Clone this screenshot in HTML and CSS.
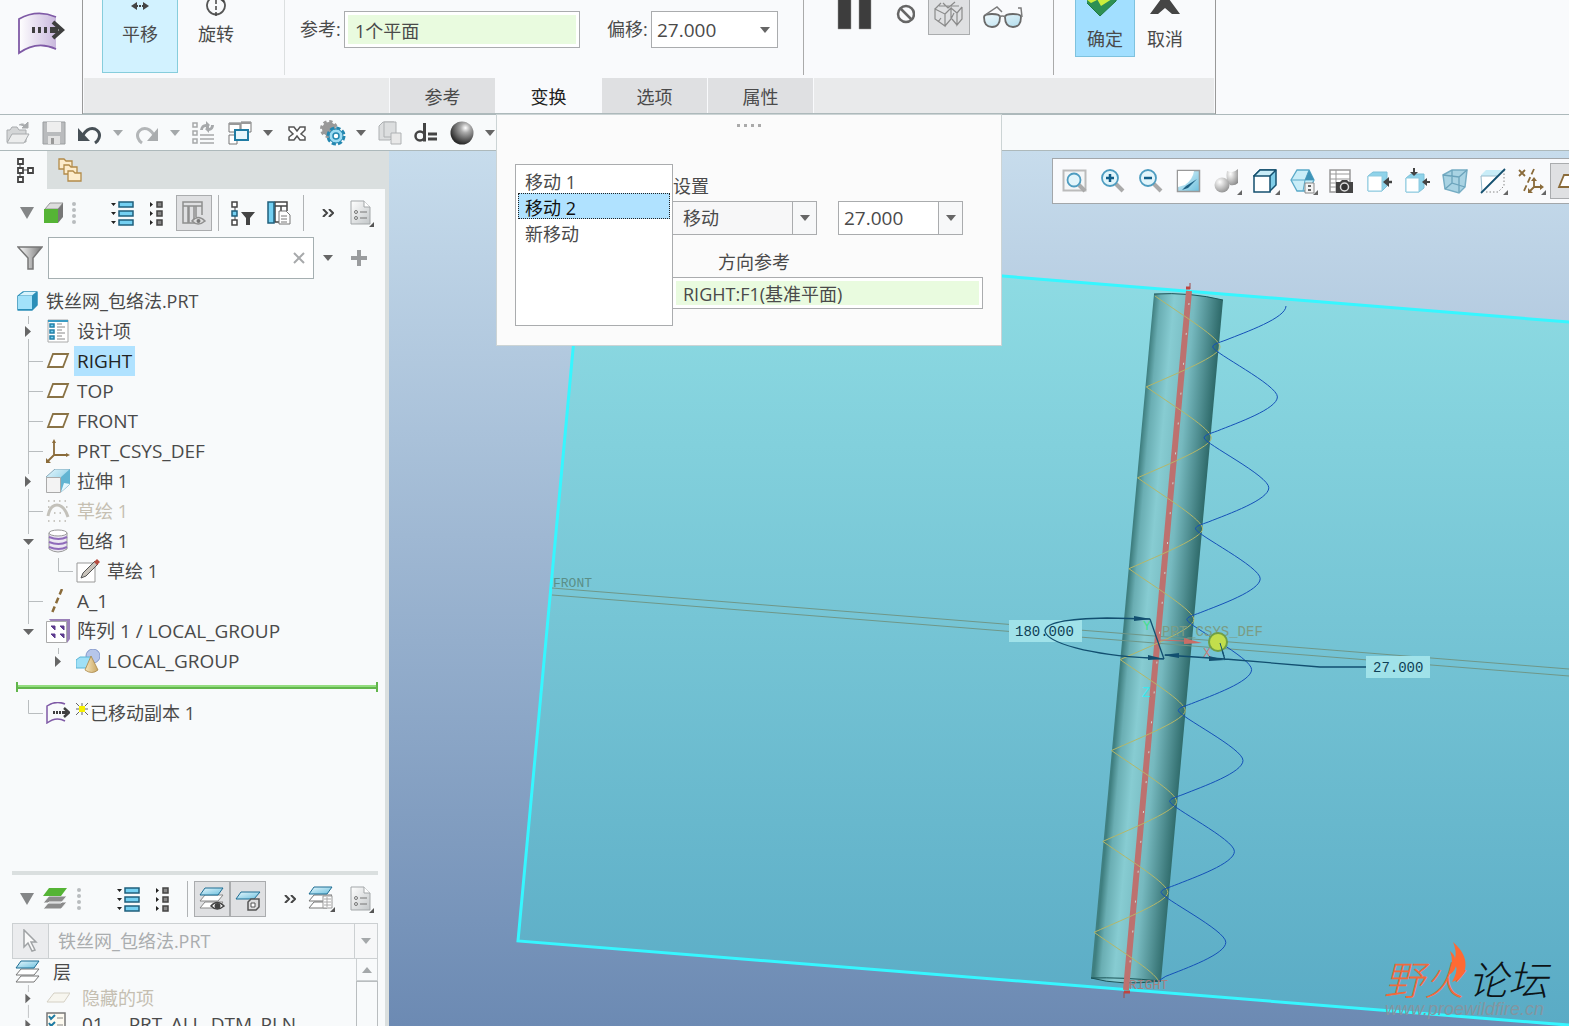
FILE: index.html
```html
<!DOCTYPE html>
<html lang="zh-CN">
<head>
    <meta charset="UTF-8">
    <meta name="viewport" content="width=device-width, initial-scale=1.0">
    <title>铁丝网_包络法.PRT</title>
    <link rel="stylesheet" href="styles.css">
</head>
<body>
    <!-- Shared icons -->
    <svg class="defs" width="0" height="0" aria-hidden="true">
        <defs>
            <linearGradient id="gSheet" x1="0" x2="1"><stop offset="0" stop-color="#fff"/><stop offset="1" stop-color="#c9b8dd"/></linearGradient>
            <linearGradient id="gBlue" x1="0" y1="0" x2="1" y2="1"><stop offset="0" stop-color="#e6f7fd"/><stop offset="1" stop-color="#6cc0de"/></linearGradient>
            <linearGradient id="gGray" x1="0" y1="0" x2="1" y2="1"><stop offset="0" stop-color="#fff"/><stop offset="1" stop-color="#c3c7c9"/></linearGradient>
            <linearGradient id="gFunnel" x1="0" x2="1"><stop offset="0" stop-color="#fff"/><stop offset="1" stop-color="#777"/></linearGradient>
            <linearGradient id="gTan" x1="0" x2="1"><stop offset="0" stop-color="#f7e6bd"/><stop offset="1" stop-color="#c9a763"/></linearGradient>
            <radialGradient id="gBall" cx=".65" cy=".28" r=".7"><stop offset="0" stop-color="#fff"/><stop offset=".3" stop-color="#aaa"/><stop offset="1" stop-color="#2c2c2c"/></radialGradient>
            <radialGradient id="gSilver" cx=".35" cy=".3" r=".8"><stop offset="0" stop-color="#fff"/><stop offset="1" stop-color="#8a8a8a"/></radialGradient>
        </defs>
        <symbol id="caret" viewBox="0 0 12 8"><path d="M1 1h10L6 7z" fill="#666"/></symbol>
        <symbol id="caret-off" viewBox="0 0 12 8"><path d="M1 1h10L6 7z" fill="#a4a8aa"/></symbol>
        <symbol id="toggle" viewBox="0 0 14 12"><path d="M0 0h14L7 12z" fill="#848687"/></symbol>
        <symbol id="grip" viewBox="0 0 4 24"><g fill="#b9bcbe"><circle cx="2" cy="3" r="2"/><circle cx="2" cy="9" r="2"/><circle cx="2" cy="15" r="2"/><circle cx="2" cy="21" r="2"/></g></symbol>
        <symbol id="expand" viewBox="0 0 24 26"><path d="M1 3h5L3.500 6zM1 12h5l-2.500 3zM1 21h5l-2.500 3z" fill="#222"/><path d="M9 2h14v5H9zM9 11h14v5H9zM9 20h14v5H9z" fill="#74d0f2" stroke="#1f5f7c" stroke-width="1.500"/></symbol>
        <symbol id="collapse" viewBox="0 0 14 26"><path d="M1 2v5l3-2.500zM1 11v5l3-2.500zM1 20v5l3-2.500z" fill="#222"/><path d="M8 2h5v5H8zM8 11h5v5H8zM8 20h5v5H8z" fill="#888" stroke="#444" stroke-width="1.500"/></symbol>
        <symbol id="more" viewBox="0 0 12 8"><path d="M1 0l4 4-4 4M7 0l4 4-4 4" fill="none" stroke="#444" stroke-width="2"/></symbol>
        <symbol id="report" viewBox="0 0 26 28"><path d="M2 2h13l6 6v17H2z" fill="url(#gGray)" stroke="#a3a7a9"/><path d="M15 2v6h6" fill="#fff" stroke="#a3a7a9"/><g fill="none" stroke="#777"><circle cx="7" cy="13" r="1.500"/><circle cx="7" cy="19" r="1.500"/><path d="M11 13h7M11 19h7"/></g><path d="M25 23v5h-5z" fill="#555"/></symbol>
        <symbol id="corner" viewBox="0 0 5 5"><path d="M5 0v5H0z" fill="#666"/></symbol>
        <symbol id="plane" viewBox="0 0 24 24"><path d="M7 5h15l-5 13H2z" fill="#fff" stroke="#8a7346" stroke-width="1.800"/></symbol>
        <symbol id="layers" viewBox="0 0 26 24"><g stroke="#777" fill="#fff"><path d="M6 16h18l-5 6H1z"/><path d="M6 9h18l-5 6H1z"/></g><path d="M6 1h18l-5 7H1z" fill="url(#gBlue)" stroke="#1d6c92"/></symbol>
        <symbol id="move-sheet" viewBox="0 0 48 44"><path d="M2 10Q20-2 39 6v33Q20 29 2 42z" fill="url(#gSheet)"/><path d="M39 6Q20-2 2 8v34Q20 29 39 38" fill="none" stroke="#7f5aa6" stroke-width="1.800"/><path d="M15 16h3v6h-3zM21 16h3v6h-3zM27 16h3v6h-3zM33 16h8v6h-8z" fill="#3f3f3f"/><path d="M36 11l9 8-9 8" fill="none" stroke="#3f3f3f" stroke-width="4"/></symbol>
        <!-- Tree guides -->
        <symbol id="g-branch" viewBox="0 0 30 30"><path d="M15.500 0v30M15 15.500h15" stroke="#b9bdbf" fill="none"/></symbol>
        <symbol id="g-pipe" viewBox="0 0 30 30"><path d="M15.500 0v30" stroke="#b9bdbf"/></symbol>
        <symbol id="g-elbow" viewBox="0 0 30 30"><path d="M15.500 2v13.500H30" stroke="#b9bdbf" fill="none"/></symbol>
        <symbol id="g-closed" viewBox="0 0 30 30"><path d="M15.500 0v8M15.500 23v7" stroke="#b9bdbf"/><path d="M12 10v11l6-5.500z" fill="#666"/></symbol>
        <symbol id="g-leaf" viewBox="0 0 30 30"><path d="M15.500 2v6" stroke="#b9bdbf"/><path d="M12 10v11l6-5.500z" fill="#666"/></symbol>
        <symbol id="g-open" viewBox="0 0 30 30"><path d="M15.500 0v8M15.500 23v7" stroke="#b9bdbf"/><path d="M10 13h11l-5.500 6z" fill="#666"/></symbol>
        <symbol id="g-end" viewBox="0 0 30 30"><path d="M15.500 0v8" stroke="#b9bdbf"/><path d="M10 13h11l-5.500 6z" fill="#666"/></symbol>
    </svg>

    <header class="header">
        <div class="app-mark">
            <svg width="48" height="44"><use href="#move-sheet"/></svg>
        </div>
        <div class="ribbon">
            <div class="groups">
                <div class="group group-mode">
                    <button class="big active">
                        <svg width="24" height="22" viewBox="0 0 24 22"><path d="M3 6l6-4v8zM21 6l-6-4v8z" fill="#444"/><path d="M8 5h2v2H8zM11 5h2v2h-2zM14 5h2v2h-2z" fill="#444"/></svg>
                        <span>平移</span>
                    </button>
                    <button class="big">
                        <svg width="24" height="22" viewBox="0 0 24 22"><path d="M7-2A9 9 0 1 0 17-2" fill="none" stroke="#555" stroke-width="1.800"/><path d="M12 0v17" stroke="#444" stroke-width="1.500" stroke-dasharray="4 2"/><path d="M14-2h6v5z" fill="#444"/></svg>
                        <span>旋转</span>
                    </button>
                </div>
                <div class="group group-fields">
                    <label for="ref">参考:</label>
                    <input type="text" id="ref" class="collector ref-input" value="1个平面">
                    <label for="offset" class="offset-label">偏移:</label>
                    <div class="combo offset-combo">
                        <input type="text" id="offset" class="num" value="27.000">
                        <button class="combo-btn plain" aria-label="偏移列表"><svg width="12" height="8"><use href="#caret"/></svg></button>
                    </div>
                </div>
                <div class="group group-tools">
                    <button class="flat w54" aria-label="暂停"><svg width="36" height="30" viewBox="0 0 36 30"><path d="M1-2h13v31H1zM22-2h12v31H22z" fill="#3d3d3d" stroke="#999" stroke-width=".5"/></svg></button>
                    <button class="flat w46" aria-label="无预览"><svg width="20" height="26" viewBox="0 0 20 26"><circle cx="11" cy="14" r="8" fill="none" stroke="#666" stroke-width="2.500"/><path d="M6 9l10 10" stroke="#666" stroke-width="2.500"/></svg></button>
                    <button class="flat w42 pressed" aria-label="分离"><svg width="32" height="30" viewBox="0 0 32 30"><g fill="none" stroke="#8b8b8b" stroke-width="1.200"><path d="M2 9l10 5v12L2 19zM12 14l6-6v11l-6 7M2 9l6-6M24 13l5-6M24 13v12l5-6V7M24 13l-6-5M10 3l5 5 7-6M19 19l5 6M6 6h20M5 22l3-4M18 19l3-6"/></g></svg></button>
                    <button class="flat w66" aria-label="预览"><svg width="42" height="30" viewBox="0 0 42 30"><path d="M2 17q0-3 8-3t8 3q0 10-8 10t-8-10zM23 17q0-3 8-3t8 3q0 10-8 10t-8-10z" fill="url(#gBlue)" fill-opacity=".5" stroke="#6a6a6a" stroke-width="1.800"/><path d="M17 17q3-2 7 0M3 15l12-8 5 5M40 17L39 8h-3" fill="none" stroke="#7b7b7b" stroke-width="1.500"/></svg></button>
                </div>
                <div class="group group-end">
                    <button class="big ok">
                        <svg width="36" height="27" viewBox="0 0 36 27"><path d="M-2 1L2-3H30L29 1 13 16z" fill="#2e9053" stroke="#1f7a42"/><path d="M-1-1l5 4 6-3zM10-1l4 7 11-7z" fill="#cdee3c"/></svg>
                        <span>确定</span>
                    </button>
                    <button class="big cancel">
                        <svg width="36" height="27" viewBox="0 0 36 27"><path d="M3 14h8l7-6 7 6h8L22-1h-8z" fill="#454545"/></svg>
                        <span>取消</span>
                    </button>
                </div>
            </div>
            <div class="tabs">
                <div class="tab-fill tab-lead"></div>
                <button class="tab">参考</button>
                <div class="tab-slot">
                    <button class="tab current">变换</button>
                    <section class="panel">
                        <div class="panel-grip"><i></i><i></i><i></i><i></i></div>
                        <div class="panel-body">
                            <select class="moves" size="5" aria-label="移动">
                                <option>移动 1</option>
                                <option selected>移动 2</option>
                                <option>新移动</option>
                            </select>
                            <div class="settings">
                                <label for="moveType">设置</label>
                                <div class="settings-row">
                                    <div class="combo type-combo">
                                        <select id="moveType"><option>移动</option><option>旋转</option></select>
                                        <span class="combo-btn"><svg width="12" height="8"><use href="#caret"/></svg></span>
                                    </div>
                                    <div class="combo value-combo">
                                        <input type="text" class="num" value="27.000" aria-label="移动值">
                                        <button class="combo-btn" aria-label="移动值列表"><svg width="12" height="8"><use href="#caret"/></svg></button>
                                    </div>
                                </div>
                                <label for="direction" class="direction-label">方向参考</label>
                                <input type="text" id="direction" class="collector direction-input" value="RIGHT:F1(基准平面)">
                            </div>
                        </div>
                    </section>
                </div>
                <button class="tab">选项</button>
                <button class="tab">属性</button>
                <div class="tab-fill"></div>
            </div>
        </div>
    </header>

    <nav class="quickbar">
        <button class="tool" aria-label="打开"><svg width="24" height="24" viewBox="0 0 24 24"><path d="M1 21V9h3l2-3h5l2 3h7v12z" fill="#d4d6d7" stroke="#a9acae"/><path d="M1 22l5-9h17l-5 9z" fill="#eceded" stroke="#a9acae"/><path d="M13 4q5-3 7 2M22 1v6h-6z" fill="#a9acae" stroke="#a9acae"/></svg></button>
        <button class="tool" aria-label="保存"><svg width="24" height="24" viewBox="0 0 24 24"><path d="M1 1h22v22H1z" fill="#b9bbbd" stroke="#9b9ea0"/><path d="M5 1h14v10H5z" fill="#eee"/><path d="M6 15h12v8H6z" fill="#e2e2e2"/><path d="M9 17h3v6H9z" fill="#999"/></svg></button>
        <button class="tool" aria-label="撤消"><svg width="24" height="24" viewBox="0 0 24 24"><path d="M5 14Q10 6 17 8q6 3 4 9-1 3-4 5" fill="none" stroke="#475056" stroke-width="3"/><path d="M0 7v13h12z" fill="#475056"/></svg></button>
        <button class="caret" aria-label="撤消列表"><svg width="12" height="8"><use href="#caret-off"/></svg></button>
        <button class="tool" aria-label="重做"><svg width="24" height="24" viewBox="0 0 24 24"><path d="M19 14Q14 6 7 8q-6 3-4 9 1 3 4 5" fill="none" stroke="#b3b6b8" stroke-width="3"/><path d="M23 7v13H12z" fill="#a9acae"/></svg></button>
        <button class="caret" aria-label="重做列表"><svg width="12" height="8"><use href="#caret-off"/></svg></button>
        <button class="tool" aria-label="重新生成"><svg width="24" height="24" viewBox="0 0 24 24"><g fill="none" stroke="#a6a9ab" stroke-width="1.500"><path d="M1 2h4v4H1zM1 10h4v4H1zM1 18h4v4H1zM8 14h14M8 18h14M8 22h14"/></g><path d="M8 9q1-6 6-6V0l4 4-4 4V6q-3 0-3 3zM22 4q0 5-5 6v2l-4-4 4-3v2q2 0 2-3z" fill="#a6a9ab"/></svg></button>
        <button class="tool" aria-label="窗口"><svg width="24" height="24" viewBox="0 0 24 24"><g fill="#fff" stroke="#777"><path d="M1 2h11v9H1zM13 1h10v10H13zM1 14h8v9H1z"/></g><path d="M1 2h11v2H1zM13 1h10v2H13z" fill="#999"/><path d="M7 9h13v10H7z" fill="#e6f6fc" stroke="#1f7ba3" stroke-width="2"/></svg></button>
        <button class="caret" aria-label="窗口列表"><svg width="12" height="8"><use href="#caret"/></svg></button>
        <button class="tool" aria-label="关闭"><svg width="24" height="24" viewBox="0 0 24 24"><path d="M4 6h5l3 4 3-4h5v3l-4 4 4 3v3h-5l-3-4-3 4H4v-3l4-3-4-4z" fill="#fff" stroke="#555" stroke-width="1.500"/></svg></button>
        <button class="tool" aria-label="设置"><svg width="26" height="26" viewBox="0 0 26 26"><circle cx="9" cy="9" r="7" fill="#999" stroke="#999" stroke-width="4" stroke-dasharray="3 2.500"/><circle cx="16" cy="16" r="7.500" fill="none" stroke="#2387b0" stroke-width="4" stroke-dasharray="3.900 2"/><circle cx="16" cy="16" r="7" fill="#9edcf3" stroke="#2387b0"/><circle cx="16" cy="16" r="3" fill="#fff" stroke="#2387b0" stroke-width="1.500"/></svg></button>
        <button class="caret" aria-label="设置列表"><svg width="12" height="8"><use href="#caret"/></svg></button>
        <button class="tool" aria-label="模型"><svg width="24" height="24" viewBox="0 0 24 24"><g fill="#dcdedf" stroke="#aeb1b3"><path d="M1 5l4-4h11v14l-4 4H1z"/><path d="M6 1h12v15H6z"/><path d="M13 12h10v11H13z" fill="#e8e8e8"/></g></svg></button>
        <button class="tool" aria-label="尺寸"><svg width="24" height="24" viewBox="0 0 24 24"><circle cx="6" cy="15" r="4.500" fill="none" stroke="#444" stroke-width="2.500"/><path d="M10.500 2v18.500M14 13h9M14 18h9" stroke="#444" stroke-width="3"/></svg></button>
        <button class="tool" aria-label="外观"><svg width="24" height="24" viewBox="0 0 24 24"><circle cx="12" cy="12" r="11.500" fill="url(#gBall)"/></svg></button>
        <button class="caret" aria-label="外观列表"><svg width="12" height="8"><use href="#caret"/></svg></button>
    </nav>

    <main class="main">
        <aside class="sidebar">
            <div class="side-tabs">
                <button class="side-tab on" aria-label="模型树"><svg width="20" height="26" viewBox="0 0 20 26"><g fill="#fff" stroke="#444" stroke-width="1.800"><path d="M6 6v14M6 13h8" stroke-width="1"/><path d="M4 2h5v5H4zM4 11h5v5H4zM4 20h5v5H4zM14 11h5v5h-5z"/></g></svg></button>
                <button class="side-tab" aria-label="文件夹浏览器"><svg width="26" height="26" viewBox="0 0 26 26"><g fill="#fdeccb" stroke="#b28b4a" stroke-width="1.300"><path d="M1 12V2h5l2 2h6v8z"/><path d="M6 17V8h5l2 2h6v7z"/><path d="M10 24V14h5l2 2h6v8z"/></g></svg></button>
            </div>

            <div class="side-bar">
                <button class="cell w30" aria-label="折叠"><svg width="14" height="12"><use href="#toggle"/></svg></button>
                <span class="cell w24"><svg width="20" height="22" viewBox="0 0 20 22"><path d="M1 7l5-6h13l-5 6z" fill="#ddd" stroke="#999"/><path d="M14 7l5-6v14l-5 6z" fill="#777"/><path d="M0 7h14v14H0z" fill="#55b435"/></svg></span>
                <span class="cell w16"><svg width="4" height="24"><use href="#grip"/></svg></span>
                <span class="spacer"></span>
                <button class="cell w34" aria-label="全部展开"><svg width="24" height="26"><use href="#expand"/></svg></button>
                <button class="cell w34" aria-label="全部折叠"><svg width="14" height="26"><use href="#collapse"/></svg></button>
                <button class="cell w36 pressed lead" aria-label="列显示"><svg width="24" height="26" viewBox="0 0 24 26"><g fill="none" stroke="#8f8f8f" stroke-width="1.500"><path d="M1 2h19v4H1zM1 6v17h5V6M7 6v17h5V6M14 6v11M20 6v9"/></g><path d="M10 21q6-7 13 0-7 6-13 0z" fill="#ddd" stroke="#8f8f8f" stroke-width="1.500"/><circle cx="16.500" cy="21" r="2" fill="#777"/></svg></button>
                <i class="rule"></i>
                <button class="cell w36" aria-label="树过滤器"><svg width="24" height="26" viewBox="0 0 24 26"><path d="M4 6v14" stroke="#444"/><path d="M1 2h5v5H1zM1 20h5v5H1z" fill="#fff" stroke="#444" stroke-width="1.500"/><path d="M1 11h5v5H1z" fill="#74d0f2" stroke="#1f5f7c" stroke-width="1.500"/><path d="M10 12h14l-5 6v7h-4v-7z" fill="#444"/></svg></button>
                <button class="cell w36" aria-label="树列"><svg width="24" height="26" viewBox="0 0 24 26"><path d="M8 2h12v4H8zM8 6h6v16H8zM14 6h6v5" fill="#fff" stroke="#444" stroke-width="1.500"/><path d="M1 2h6v21H1z" fill="#74d0f2" stroke="#1f5f7c" stroke-width="1.500"/><path d="M12 11h7l4 4v9H12z" fill="#fff" stroke="#777"/><path d="M14 16h6M14 19h6M14 22h6" stroke="#777"/></svg></button>
                <i class="rule"></i>
                <button class="cell w36" aria-label="更多"><svg width="12" height="8"><use href="#more"/></svg></button>
                <button class="cell w32" aria-label="报告"><svg width="26" height="28"><use href="#report"/></svg></button>
            </div>

            <div class="search">
                <label for="treeFilter" class="funnel" aria-label="过滤"><svg width="26" height="24" viewBox="0 0 26 24"><path d="M1 1h24l-9 11v11h-5V12z" fill="url(#gFunnel)" stroke="#777" stroke-width="1.500"/></svg></label>
                <div class="search-box">
                    <input type="text" id="treeFilter">
                    <button class="clear" aria-label="清除"><svg width="12" height="12" viewBox="0 0 12 12"><path d="M1 1l10 10M11 1L1 11" stroke="#a7a9ab" stroke-width="2"/></svg></button>
                </div>
                <button class="cell w28" aria-label="过滤列表"><svg width="12" height="8"><use href="#caret"/></svg></button>
                <button class="cell w34" aria-label="添加"><svg width="18" height="18" viewBox="0 0 18 18"><path d="M9 1v16M1 9h16" stroke="#9a9c9e" stroke-width="4"/></svg></button>
            </div>

            <div class="tree">
                <div class="row root"><svg width="24" height="24" viewBox="0 0 24 24"><path d="M3 7l5-4h14v13l-5 5H3z" fill="#2b8fb8" stroke="#2b8fb8" stroke-width="1.500" stroke-linejoin="round"/><path d="M3 7h14v13H3z" fill="#a2e2fa"/><path d="M4 6.500L9 3h12l-4 3.500z" fill="#d8f4fd"/></svg><span>铁丝网_包络法.PRT</span></div>
                <ul>
                    <li class="row"><svg class="guide"><use href="#g-closed"/></svg><svg width="24" height="24" viewBox="0 0 24 24"><path d="M2 1h20v22H2z" fill="#fff" stroke="#aaa"/><path d="M2 1h20v2H2z" fill="#3a9cc4"/><path d="M4 5h4v3H4zM4 11h4v3H4zM4 17h4v3H4z" fill="#74d0f2" stroke="#2380a8" stroke-width="1.500"/><path d="M11 5h5M11 8h8M11 11h5M11 14h8M11 17h5M11 20h8" stroke="#888"/></svg><span>设计项</span></li>
                    <li class="row en"><svg class="guide"><use href="#g-branch"/></svg><svg width="24" height="24"><use href="#plane"/></svg><span class="picked">RIGHT</span></li>
                    <li class="row en"><svg class="guide"><use href="#g-branch"/></svg><svg width="24" height="24"><use href="#plane"/></svg><span>TOP</span></li>
                    <li class="row en"><svg class="guide"><use href="#g-branch"/></svg><svg width="24" height="24"><use href="#plane"/></svg><span>FRONT</span></li>
                    <li class="row en"><svg class="guide"><use href="#g-branch"/></svg><svg width="24" height="24" viewBox="0 0 24 24"><path d="M8 2v14h14M8 16l-6 6" fill="none" stroke="#8a6b3a" stroke-width="1.800"/><path d="M8 0l2 4H6zM24 16l-4-2v4zM0 24v-5l5 5z" fill="#8a6b3a"/></svg><span>PRT_CSYS_DEF</span></li>
                    <li class="row"><svg class="guide"><use href="#g-closed"/></svg><svg width="24" height="24" viewBox="0 0 24 24"><path d="M0 8L9 0h15v15l-9 8z" fill="url(#gBlue)" stroke="#8ab"/><path d="M15 8l9-8v15l-9 8z" fill="#62b4d2"/><path d="M15 23l9-8-6-1z" fill="#e6f7fd"/><path d="M.5 8.500h14v15H.500z" fill="#f3f3f3" stroke="#aaa"/></svg><span>拉伸 1</span></li>
                    <li class="row faded"><svg class="guide"><use href="#g-branch"/></svg><svg width="24" height="24" viewBox="0 0 24 24"><path d="M2 17Q4 6 11 6t11 12" fill="none" stroke="#c3c1ba" stroke-width="3"/><path d="M2 2h20M2 22h20M2 8h3M20 8h3M8 14h8" stroke="#b9b7b0" stroke-width="1.500" stroke-dasharray="1.500 4"/></svg><span>草绘 1</span></li>
                    <li class="row"><svg class="guide"><use href="#g-open"/></svg><svg width="24" height="24" viewBox="0 0 24 24"><path d="M3 4v16q9 6 18 0V4z" fill="#ece8f2" stroke="#999"/><path d="M3 8q10 4 18 0M3 13q10 4 18 0M3 18q10 4 18 0" fill="none" stroke="#8f6bba" stroke-width="2"/><ellipse cx="12" cy="4" rx="9" ry="3" fill="#fff" stroke="#999"/></svg><span>包络 1</span></li>
                    <li class="row"><svg class="guide"><use href="#g-pipe"/></svg><svg class="guide"><use href="#g-elbow"/></svg><svg width="24" height="24" viewBox="0 0 24 24"><path d="M1 4h18v19H1z" fill="#fff" stroke="#999"/><path d="M5 19l2-5L19 2l3 3L10 17z" fill="#c9c3bb" stroke="#555"/><path d="M18 3l3-3 3 3-3 3z" fill="#b54a3e"/></svg><span>草绘 1</span></li>
                    <li class="row en"><svg class="guide"><use href="#g-branch"/></svg><svg width="24" height="24" viewBox="0 0 24 24"><path d="M16 0L6 24" stroke="#8a6b3a" stroke-width="2.500" stroke-dasharray="6 3.500"/></svg><span>A_1</span></li>
                    <li class="row en"><svg class="guide"><use href="#g-end"/></svg><svg width="24" height="24" viewBox="0 0 24 24"><path d="M3 0h21v20l-3 4z" fill="#9a80b8"/><path d="M.5 2.500h20v21H.500z" fill="#fff" stroke="#aaa"/><path d="M5 7h4v4zM14 7h4v4zM5 15h4v4zM14 15h4v4z" fill="#5d3a8e" stroke="#5d3a8e"/></svg><span>阵列 1 / LOCAL_GROUP</span></li>
                    <li class="row en"><i class="guide"></i><svg class="guide"><use href="#g-leaf"/></svg><svg width="24" height="24" viewBox="0 0 24 24"><circle cx="17" cy="7" r="7" fill="#b6c6ea" stroke="#8297c9"/><path d="M0 11l4-3h11v9l-3 2H0z" fill="#9fe0f6" stroke="#5ab4d6"/><path d="M15 7l7 14q-6 5-13 0z" fill="url(#gTan)" stroke="#a88545" stroke-width=".8"/></svg><span>LOCAL_GROUP</span></li>
                </ul>
                <svg class="insert-bar" width="100%" height="10" aria-hidden="true"><rect y="3" width="100%" height="2" fill="#93dd7f"/><rect y="5" width="100%" height="2" fill="#62b64c"/><rect width="2" height="10" fill="#62b64c"/><rect x="100%" width="2" height="10" fill="#62b64c" transform="translate(-2)"/></svg>
                <div class="row pending"><svg class="guide"><use href="#g-elbow"/></svg><svg width="24" height="22" viewBox="0 0 24 22"><path d="M19 2Q10-2 1 4v17q9-7 18-2" fill="none" stroke="#7f5aa6" stroke-width="1.500"/><path d="M7 9h2v3H7zM10 9h2v3h-2zM13 9h2v3h-2zM16 9h5v3h-5z" fill="#3f3f3f"/><path d="M18 6l5 4.500-5 4.500" fill="none" stroke="#3f3f3f" stroke-width="2.500"/></svg><svg class="star" width="12" height="12" viewBox="0 0 12 12"><path d="M0 0l12 12M12 0L0 12M6 0v12M0 6h12" stroke="#666"/><path d="M3 3h6v6H3z" fill="#f5f000"/></svg><span>已移动副本 1</span></div>
            </div>

            <div class="layers">
                <div class="side-bar">
                    <button class="cell w30" aria-label="折叠层"><svg width="14" height="12"><use href="#toggle"/></svg></button>
                    <span class="cell w26"><svg width="24" height="22" viewBox="0 0 24 22"><path d="M6 14h18l-6 7H0zM6 8h18l-6 7H0z" fill="#8b8b8b" stroke="#f8fafb"/><path d="M6 0h18l-6 8H0z" fill="#55b435"/></svg></span>
                    <span class="cell w22"><svg width="4" height="24"><use href="#grip"/></svg></span>
                    <span class="spacer"></span>
                    <button class="cell w34" aria-label="展开层"><svg width="24" height="26"><use href="#expand"/></svg></button>
                    <button class="cell w34" aria-label="折叠全部层"><svg width="14" height="26"><use href="#collapse"/></svg></button>
                    <i class="rule"></i>
                    <button class="cell w36 pressed" aria-label="显示层"><svg width="26" height="26" viewBox="0 0 26 26"><g fill="#fff" stroke="#888"><path d="M6 16h18l-5 6H1z"/><path d="M6 9h18l-5 6H1z"/></g><path d="M6 2h18l-5 7H1z" fill="url(#gBlue)" stroke="#1d6c92"/><path d="M12 20q6-7 13 0-7 6-13 0z" fill="#fff" stroke="#444" stroke-width="1.500"/><circle cx="18.500" cy="20" r="3" fill="#444"/></svg></button>
                    <button class="cell w36 pressed" aria-label="层项"><svg width="26" height="26" viewBox="0 0 26 26"><path d="M6 6h19l-6 7H1z" fill="url(#gBlue)" stroke="#1d6c92"/><path d="M13 16l3-3h8v8l-3 3h-8z" fill="#ddd" stroke="#555" stroke-width="1.500"/><path d="M16 17h4v4h-4z" fill="#fff" stroke="#555"/></svg></button>
                    <button class="cell w36 lead" aria-label="更多层命令"><svg width="12" height="8"><use href="#more"/></svg></button>
                    <button class="cell w28" aria-label="层报告"><svg width="28" height="28" viewBox="0 0 28 28"><use href="#layers" width="26" height="24" y="1"/><path d="M15 11h9v12h-9z" fill="#fff" stroke="#999"/><path d="M16 14h7M16 17h7M16 20h7M19 12v10" stroke="#aaa"/><path d="M27 22v5h-5z" fill="#555"/></svg></button>
                    <button class="cell w32 far" aria-label="层设置"><svg width="26" height="28"><use href="#report"/></svg></button>
                </div>
                <div class="layer-combo">
                    <button class="pick" disabled aria-label="选择"><svg width="16" height="24" viewBox="0 0 16 24"><path d="M1 1v17l4-4 4 8 3-1-4-8h5z" fill="#fafafa" stroke="#a0a3a5" stroke-width="1.500"/></svg></button>
                    <select disabled aria-label="活动模型"><option>铁丝网_包络法.PRT</option></select>
                    <span class="layer-caret"><svg width="12" height="8"><use href="#caret-off"/></svg></span>
                </div>
                <div class="layer-view">
                    <ul class="layer-tree">
                        <li class="layer-row top"><svg width="26" height="24"><use href="#layers"/></svg><span>层</span></li>
                        <li class="layer-row faded"><svg class="guide"><use href="#g-closed"/></svg><svg width="24" height="24" viewBox="0 0 24 24"><path d="M8 7h16l-6 9H1z" fill="#f7f6ef" stroke="#d4d0c4"/></svg><span>隐藏的项</span></li>
                        <li class="layer-row en"><svg class="guide"><use href="#g-closed"/></svg><svg width="24" height="24" viewBox="0 0 24 24"><path d="M1 1h18v22H1z" fill="#fdfaf0" stroke="#777" stroke-width="1.500"/><path d="M3 4l2 3 4-4M3 11l2 3 4-4M3 18l2 3 4-4" fill="none" stroke="#1f7ba3" stroke-width="2"/><path d="M11 6h6M11 13h6" stroke="#888"/></svg><span>01___PRT_ALL_DTM_PLN</span></li>
                    </ul>
                    <div class="scroll"><button aria-label="向上滚动"><svg width="12" height="8" viewBox="0 0 12 8"><path d="M1 7h10L6 1z" fill="#a4a8aa"/></svg></button><i></i></div>
                </div>
            </div>
        </aside>

        <div class="viewport">
            <svg class="scene" viewBox="389 151 1180 875" preserveAspectRatio="xMinYMin slice">
                <defs>
                    <linearGradient id="gPlane" x1="0" y1="0" x2="0" y2="1"><stop offset="0" stop-color="#90dde4"/><stop offset="1" stop-color="#5aabc5"/></linearGradient>
                    <linearGradient id="gRod" gradientUnits="userSpaceOnUse" x1="1154" y1="294" x2="1222" y2="300">
                        <stop offset="0" stop-color="#3f7f80"/><stop offset=".1" stop-color="#6aaeb3"/><stop offset=".3" stop-color="#87ccd2"/><stop offset=".6" stop-color="#76b9bf"/><stop offset=".82" stop-color="#508f92"/><stop offset="1" stop-color="#2f6b6b"/>
                    </linearGradient>
                </defs>
                <path d="M583 242L1580 323V1026L518 941z" fill="url(#gPlane)" stroke="#36f6ff" stroke-width="3"/>
                <!-- Rod -->
                <path d="M1154 294Q1190 292 1223 300L1161 981Q1120 986 1091 978z" fill="url(#gRod)"/>
                <path d="M1154 294Q1190 292 1223 300M1091 978Q1120 977 1161 981Q1120 986 1091 978" fill="none" stroke="#1c5558"/>
                <!-- FRONT plane seen edge on -->
                <path d="M552 588L1569 669M552 595L1569 676" stroke="#6f9788" fill="none"/>
                <path d="M1189 291L1126 990" stroke="#bd716f" stroke-width="6"/>
                <path d="M1189 303L1128 985" stroke="#c9dcd9" stroke-dasharray="2 28"/>
                <path d="M1190 283v6M1124 992v6" stroke="#a04a48"/>
                <path d="M1186 288h4M1124 992h6" stroke="#c04440" stroke-width="3"/>
                <path class="helix" stroke="#b5b768" d="M1155 296c30 21 65 42 65 51s-40 25-73.700 39.900c30 21 65 42 65 51s-40 25-73.700 39.900c30 21 65 42 65 51s-40 25-73.700 39.900c30 21 65 42 65 51s-40 25-73.700 39.900c30 21 65 42 65 51s-40 25-73.700 39.900c30 21 65 42 65 51s-40 25-73.700 39.900c30 21 65 42 65 51s-40 25-73.700 39.900c30 21 65 42 65 51"/>
                <path class="helix" stroke="#1450b8" d="M1286 306c0 12-40 26-60 34c-8 3-13 4-13.300 7c1 6 65 38 64.700 49.900c0 12-40 26-60 34c-8 3-13 4-13.300 7c1 6 65 38 64.700 49.900c0 12-40 26-60 34c-8 3-13 4-13.300 7c1 6 65 38 64.700 49.900c0 12-40 26-60 34c-8 3-13 4-13.300 7c1 6 65 38 64.700 49.900c0 12-40 26-60 34c-8 3-13 4-13.300 7c1 6 65 38 64.700 49.900c0 12-40 26-60 34c-8 3-13 4-13.300 7c1 6 65 38 64.700 49.900c0 12-40 26-60 34c-8 3-13 4-13.300 7c1 6 65 38 64.700 49.900c0 12-40 26-60 34l-8 5"/>
                <text class="tag" x="553" y="587">FRONT</text>
                <text class="tag tag-lg" x="1162" y="636">PRT_CSYS_DEF</text>
                <text class="tag tag-red" x="1129" y="989">RIGHT</text>
                <text class="tag tag-z" x="1142" y="697">Z</text>
                <text class="tag tag-y" x="1143" y="630">Y</text>
                <text class="tag tag-x" x="1203" y="657">X</text>
                <path d="M1160 640l24 1" stroke="#c96d66"/><path d="M1184 638l18 5-18 1z" fill="#c96d66"/>
                <!-- Dimensions -->
                <rect x="1009" y="620" width="73" height="22" fill="#a0e2e9"/>
                <rect x="1366" y="656" width="64" height="22" fill="#a0e2e9"/>
                <text class="dim" x="1015" y="636">180.000</text>
                <text class="dim" x="1373" y="672">27.000</text>
                <g fill="none" stroke="#124f70" stroke-width="1.300">
                    <path d="M1150 619l-43-1q-62 1-62 13c2 12 45 24 105 27l14 1M1150 619l14 40M1165 655l60 4M1220 643l5 17M1225 659l95 8h46"/>
                </g>
                <path d="M1151 619l-17-3v5zM1164 659l-16-4v5zM1163 655l16-2v5zM1225 660l-16-4v5z" fill="#124f70"/>
                <circle cx="1218" cy="642" r="9" fill="#c2de4c" stroke="#6f9f45" stroke-width="2"/>
                <path d="M1220 643l4 13" stroke="#124f70"/>
                <!-- Forum mark -->
                <text class="mark" x="1384" y="995"><tspan fill="#f06a3c">野火</tspan><tspan x="1468" fill="#0d1417">论坛</tspan></text>
                <path d="M1453 942q15 13 12 27-2 10-13 13 6-11 4-16-2 7-8 9 7-11 2-24 5 4 5 8 2-8-2-17z" fill="#ff6a33"/>
                <text class="site" x="1385" y="1015">www.proewildfire.cn</text>
            </svg>

            <div class="view-tools">
                <button aria-label="重新调整"><svg width="26" height="26" viewBox="0 0 26 26"><path d="M1.500 2.500h22v20h-22z" fill="#f4f6f7" stroke="#bbb" stroke-width="2"/><path d="M17 17l6 6" stroke="#aaa" stroke-width="4"/><circle cx="12" cy="12" r="6.500" fill="#e2f5fb" stroke="#4d9cc0" stroke-width="1.800"/></svg></button>
                <button aria-label="放大"><svg width="26" height="26" viewBox="0 0 26 26"><path d="M15 15l8 8" stroke="#aaa" stroke-width="4"/><circle cx="10" cy="10" r="8" fill="#e2f5fb" stroke="#4d9cc0" stroke-width="1.800"/><path d="M10 6v8M6 10h8" stroke="#125e88" stroke-width="2.500"/></svg></button>
                <button aria-label="缩小"><svg width="26" height="26" viewBox="0 0 26 26"><path d="M15 15l8 8" stroke="#aaa" stroke-width="4"/><circle cx="10" cy="10" r="8" fill="#e2f5fb" stroke="#4d9cc0" stroke-width="1.800"/><path d="M6 10h8" stroke="#125e88" stroke-width="2.500"/></svg></button>
                <button aria-label="重画"><svg width="26" height="26" viewBox="0 0 26 26"><path d="M1.500 2.500h22v21h-22z" fill="url(#gBlue)" stroke="#999" stroke-width="1.500"/><path d="M2 3h16q-1 8-9 14l-7 2z" fill="#fff"/><path d="M21 11l-9 9-6 2 4-4z" fill="#1d6083"/></svg></button>
                <button aria-label="渲染选项"><svg width="26" height="26" viewBox="0 0 26 26"><path d="M13 3q6 3 11-2v14q-3 3-8 2-5-5-3-14z" fill="url(#gSilver)"/><circle cx="8" cy="17" r="7.500" fill="url(#gSilver)"/></svg><svg class="corner" width="5" height="5"><use href="#corner"/></svg></button>
                <button aria-label="显示样式"><svg width="26" height="26" viewBox="0 0 26 26"><path d="M2 8l6-6h16v15l-6 6z" fill="#7fcde8" stroke="#14506f" stroke-width="1.500"/><path d="M2 8l6-6h16l-6 6z" fill="#c9edf8"/><path d="M2 8h16v16H2z" fill="#fff" stroke="#14506f" stroke-width="1.500"/><path d="M18 8l6-6M2 8l6-6h16" fill="none" stroke="#14506f" stroke-width="1.500"/></svg><svg class="corner" width="5" height="5"><use href="#corner"/></svg></button>
                <button aria-label="已保存方向"><svg width="26" height="26" viewBox="0 0 26 26"><path d="M1 12L7 2h12l5 10-5 11H7z" fill="#c9edf8" stroke="#5aa9c8" stroke-width="1.300"/><path d="M1 12h14L19 2M15 12l-2 11M15 12h9" fill="none" stroke="#5aa9c8"/><path d="M19 2l5 10h-9z" fill="#3f94b8"/><path d="M15 15h9v10h-9z" fill="#f4f4f4" stroke="#888"/><path d="M18 17h3v2h-3zM18 21h3v2h-3z" fill="#666"/></svg><svg class="corner" width="5" height="5"><use href="#corner"/></svg></button>
                <button aria-label="视图管理器"><svg width="26" height="26" viewBox="0 0 26 26"><path d="M2 2h20v22H2z" fill="#fff" stroke="#999" stroke-width="1.500"/><path d="M2 6h20M2 11h20M2 15h20M2 19h20M8 2v22" stroke="#999"/><path d="M8 14h4l2-2h5l2 2h4v11H8z" fill="#444"/><circle cx="16.500" cy="19" r="4" fill="#333" stroke="#ddd" stroke-width="1.500"/></svg></button>
                <button aria-label="透视图"><svg width="26" height="26" viewBox="0 0 26 26"><path d="M2 8l5-4h14v14l-5 5H2z" fill="#8fd3ea" stroke="#7cc0d8"/><path d="M2 8h14v15H2z" fill="#fff" stroke="#8fcbe0"/><path d="M26 14h-5" stroke="#444" stroke-width="2.500"/><path d="M17 14l6-5v10z" fill="#444"/></svg></button>
                <button aria-label="截面"><svg width="26" height="26" viewBox="0 0 26 26"><path d="M2 10l5-4h13v14l-5 4H2z" fill="#8fd3ea" stroke="#7cc0d8"/><path d="M2 10h13v14H2z" fill="#fff" stroke="#8fcbe0"/><path d="M10 0v4M26 14h-4" stroke="#444" stroke-width="2"/><path d="M6 4h8l-4 4zM18 14l5-4v8z" fill="#444"/></svg></button>
                <button aria-label="透明"><svg width="26" height="26" viewBox="0 0 26 26"><path d="M1 7l9-5h15l-2 17-6 6-14-4z" fill="#a9d3e3" stroke="#76adc4" stroke-width="1.500"/><path d="M1 7l16 2 8-7M17 9v15M10 2v13l13 4M10 15l-7 6" fill="none" stroke="#6ba3bb" stroke-width="1.300"/></svg></button>
                <button aria-label="剪切平面"><svg width="26" height="26" viewBox="0 0 26 26"><path d="M1 7l5-5h17L2 24z" fill="#c9edf8"/><path d="M1 8h16L2 24z" fill="#fff" stroke="#9bc"/><path d="M24 2v16l-6 6H4" fill="none" stroke="#888" stroke-dasharray="1.500 2"/><path d="M25 1L1 25" stroke="#14506f" stroke-width="1.800"/></svg><svg class="corner" width="5" height="5"><use href="#corner"/></svg></button>
                <button aria-label="基准显示"><svg width="26" height="26" viewBox="0 0 26 26"><g fill="none" stroke="#8a6b3a" stroke-width="1.800"><path d="M1 2l6 6M7 2L1 8"/><path d="M16 1L5 25" stroke-dasharray="6 3"/><path d="M16 11v8h8M16 19l-4 4"/></g><path d="M16 9l3 4h-6zM26 19l-4-3v6zM10 25v-5l5 5z" fill="#8a6b3a"/></svg><svg class="corner" width="5" height="5"><use href="#corner"/></svg></button>
                <button class="pressed" aria-label="平面显示"><svg width="26" height="26" viewBox="0 0 26 26"><path d="M8 7h17l-5 12H3z" fill="#fff" stroke="#8a6b3a" stroke-width="1.800"/></svg></button>
            </div>
        </div>
    </main>
</body>
</html>
```

FILE: styles.css
```css
* {
    box-sizing: border-box;
}
body {
    margin: 0;
    height: 100vh;
    display: flex;
    flex-direction: column;
    overflow: hidden;
    background: #f8fafb;
    color: #4a4a4a;
    font-family: "Open Sans", "Noto Sans CJK SC", sans-serif;
    font-size: 18px;
    line-height: 24px;
}
button, input, select {
    font: inherit;
    color: inherit;
    margin: 0;
    padding: 0;
    border: 0;
    border-radius: 0;
    background: none;
    outline: none;
}
select {
    appearance: none;
}
ul {
    list-style: none;
    margin: 0;
    padding: 0;
}
svg {
    display: block;
    flex: none;
}
.defs {
    position: absolute;
}

/* Ribbon */
.header {
    display: flex;
    flex: none;
    background: #f9fafc;
    border-bottom: 1px solid #adb9bb;
}
.app-mark {
    width: 83px;
    padding: 11px 17px;
    border-right: 1px solid #999;
}
.ribbon {
    width: 1133px;
    border-right: 1px solid #999;
}
.groups {
    display: flex;
    height: 78px;
}
.group {
    display: flex;
    align-items: flex-start;
    height: 75px;
    border-right: 1px solid #aaa;
}
.group-mode {
    width: 202px;
    padding-left: 19px;
    border-color: #dcdfe0;
}
.group-fields {
    width: 519px;
    padding: 11px 0 0 15px;
}
.group-fields label {
    width: 44px;
    line-height: 37px;
}
.group-fields .offset-label {
    margin-left: 27px;
}
.group-tools {
    width: 250px;
    padding-left: 24px;
}
.group-end {
    padding-left: 21px;
    border: 0;
}
.big {
    display: flex;
    flex-direction: column;
    align-items: center;
    width: 76px;
    height: 73px;
}
.big.active {
    background: #d2f2ff;
    border: 1px solid #86cddc;
    border-top: 0;
}
.big.ok, .big.cancel {
    width: 60px;
    height: 57px;
}
.big.ok {
    background: #a2dfff;
    border: 1px solid #7fc2de;
    border-top: 0;
}
.flat {
    display: flex;
    justify-content: center;
    height: 35px;
}
.pressed {
    background: #dfe0e2;
    border: 1px solid #aaacae;
}
.flat.pressed {
    border-top: 0;
}
.collector {
    background: #e9fbdf;
    border: 1px solid #aaacae;
    box-shadow: inset 0 0 0 3px #fff;
    padding-left: 10px;
}
.ref-input {
    width: 236px;
    height: 37px;
}
.combo {
    display: flex;
    background: #fff;
    border: 1px solid #aaacae;
}
.combo input, .combo select {
    flex: 1;
    min-width: 0;
    padding-left: 5px;
}
.combo-btn {
    display: flex;
    align-items: center;
    justify-content: center;
    width: 24px;
    background: #f7f8f9;
    border-left: 1px solid #aaacae;
}
.combo-btn.plain {
    background: none;
    border: 0;
}
.num {
    font-size: 19px;
}
.offset-combo {
    width: 127px;
    height: 37px;
}

/* Dashboard tabs */
.tabs {
    display: flex;
    gap: 1px;
    height: 36px;
    padding: 0 1px;
    border-bottom: 1px solid #adb9bb;
}
.tab {
    width: 105px;
    height: 35px;
    padding-top: 2px;
    background: #dfe0e2;
}
.tab.current {
    background: #f9fafc;
    color: #222;
}
.tab-slot {
    position: relative;
}
.tab-fill {
    flex: 1;
    background: #e9eaeb;
}
.tab-lead {
    flex: none;
    width: 305px;
}

/* Slide-down panel */
.panel {
    position: absolute;
    top: calc(100% + 1px);
    left: 0;
    z-index: 5;
    width: 506px;
    height: 232px;
    padding: 9px 18px 18px;
    background: #fbfbfb;
    border: 1px solid #ccd4d5;
    color: #4a4a4a;
}
.panel-grip {
    display: flex;
    justify-content: center;
    gap: 4px;
    margin-bottom: 37px;
}
.panel-grip i {
    width: 3px;
    height: 3px;
    background: #aaa;
}
.panel-body {
    display: flex;
}
.moves {
    width: 158px;
    height: 162px;
    padding: 2px;
    background: #fff;
    border: 1px solid #aaacae;
    overflow: hidden;
}
.moves option {
    height: 26px;
    min-height: 26px;
    padding: 0 6px;
    line-height: 20px;
    border: 1px solid transparent;
}
.moves option:checked {
    background: linear-gradient(#b0e2ff, #b0e2ff);
    border: 1px dotted #222;
}
.settings {
    display: flex;
    flex-direction: column;
    flex: 1;
    padding-top: 10px;
}
.settings-row {
    display: flex;
    gap: 21px;
    height: 34px;
    margin: 3px 0 15px;
}
.type-combo {
    width: 144px;
    background: #f7f7f8;
    border-left: 0;
}
.type-combo select {
    padding-left: 10px;
}
.value-combo {
    width: 125px;
}
.direction-label {
    padding-left: 45px;
}
.direction-input {
    width: 310px;
    height: 32px;
    margin-top: 3px;
    border-left: 0;
}

/* Quick access toolbar */
.quickbar {
    display: flex;
    flex: none;
    align-items: center;
    height: 36px;
    border-bottom: 1px solid #adb9bb;
}
.tool {
    display: flex;
    justify-content: center;
    width: 36px;
}
.caret {
    display: flex;
    justify-content: center;
    width: 20px;
    margin-right: 1px;
}

/* Model tree */
.main {
    display: flex;
    flex: 1;
    min-height: 0;
}
.sidebar {
    display: flex;
    flex-direction: column;
    flex: none;
    width: 389px;
    border-right: 4px solid #dadfdf;
}
.side-tabs {
    display: flex;
    flex: none;
    height: 38px;
    background: #dadfdf;
}
.side-tab {
    display: flex;
    align-items: center;
    justify-content: center;
    width: 47px;
}
.side-tab.on {
    background: #f8fafb;
}
.side-bar {
    display: flex;
    align-items: center;
    height: 46px;
    padding: 2px 7px 0 12px;
}
.cell {
    display: flex;
    flex: none;
    align-items: center;
    justify-content: center;
    height: 36px;
}
.lead {
    margin-left: 3px;
}
.far {
    margin-left: 10px;
}
.spacer {
    flex: 1;
}
.rule {
    width: 1px;
    height: 36px;
    margin: 0 6px;
    background: #b0b3b5;
}
.w16 { width: 16px; }
.w22 { width: 22px; }
.w24 { width: 24px; }
.w26 { width: 26px; }
.w28 { width: 28px; }
.w30 { width: 30px; }
.w32 { width: 32px; }
.w34 { width: 34px; }
.w36 { width: 36px; }
.w42 { width: 42px; }
.w46 { width: 46px; }
.w54 { width: 54px; }
.w66 { width: 66px; }
.search {
    display: flex;
    align-items: center;
    flex: none;
    height: 46px;
    padding: 0 9px 0 17px;
}
.funnel {
    width: 31px;
}
.search-box {
    display: flex;
    flex: 1;
    height: 42px;
    background: #fff;
    border: 1px solid #a5afb1;
}
.search-box input {
    flex: 1;
    min-width: 0;
    padding-left: 8px;
}
.clear {
    display: flex;
    align-items: center;
    justify-content: center;
    width: 28px;
}
.tree {
    flex: 1;
    min-height: 0;
    padding: 5px 7px 0 13px;
    overflow: hidden;
}
.row {
    display: flex;
    align-items: center;
    height: 30px;
}
.row span {
    margin-left: 4px;
    padding: 3px;
    white-space: nowrap;
}
.row.root {
    padding-left: 2px;
}
.en {
    font-size: 19px;
}
.guide {
    flex: none;
    width: 30px;
    height: 30px;
}
.guide + svg:not(.guide) {
    margin-left: 3px;
}
.picked {
    background: #b0e2ff;
    color: #222;
}
.faded {
    color: #c5bfb2;
}
.insert-bar {
    margin: 6px 0 6px 3px;
    width: 362px;
}
.row .star {
    margin: 0 0 8px 6px;
}
.row.pending span {
    margin-left: 0;
    padding-left: 2px;
}

/* Layers */
.layers {
    flex: none;
    height: 155px;
}
.layers::before {
    content: "";
    display: block;
    height: 4px;
    margin: 0 7px 0 12px;
    background: #dadfdf;
}
.layers .rule {
    margin-left: 8px;
}
.layers .lead {
    margin-left: 6px;
}
.layer-combo {
    display: flex;
    height: 36px;
    margin: 2px 7px 0 12px;
    border: 1px solid #ccd0d2;
    background: #f6f7f8;
    color: #aaadaf;
}
.pick {
    display: flex;
    align-items: center;
    justify-content: center;
    width: 36px;
    background: #ebecee;
    border-right: 1px solid #ccd0d2;
}
.layer-combo select {
    flex: 1;
    padding-left: 9px;
    opacity: 1;
}
.layer-caret {
    display: flex;
    align-items: center;
    justify-content: center;
    width: 23px;
    border-left: 1px solid #ccd0d2;
}
.layer-view {
    display: flex;
    height: 67px;
    margin: 0 7px 0 13px;
    overflow: hidden;
}
.layer-tree {
    flex: 1;
}
.layer-row {
    display: flex;
    align-items: center;
    height: 26px;
}
.layer-row span {
    margin-left: 12px;
    white-space: nowrap;
}
.layer-row.top {
    padding-left: 2px;
}
.layer-row .guide {
    height: 26px;
}
.scroll {
    display: flex;
    flex-direction: column;
    width: 22px;
}
.scroll button {
    display: flex;
    align-items: center;
    justify-content: center;
    height: 22px;
    border: 1px solid #ccd0d2;
    border-top: 0;
}
.scroll i {
    flex: 1;
    border: 1px solid #b9bdbf;
    border-bottom: 0;
}

/* Graphics area */
.viewport {
    position: relative;
    flex: 1;
    min-width: 0;
    background: linear-gradient(#c7dcec, #6c8ab3);
    overflow: hidden;
}
.scene {
    width: 100%;
    height: 100%;
}
.helix {
    fill: none;
    stroke-width: 1;
}
.tag {
    font-family: "Liberation Mono", monospace;
    font-size: 13px;
    fill: #5b8f88;
}
.tag-lg {
    font-size: 14px;
    fill: #7b9c84;
}
.tag-red {
    fill: #a3807f;
}
.tag-x {
    fill: #c4807d;
}
.tag-y {
    fill: #40e08c;
}
.tag-z {
    font-size: 14px;
    fill: #3ce8f0;
}
.dim {
    font-family: "Liberation Mono", monospace;
    font-size: 14px;
    fill: #0f3f55;
}
.mark {
    font-size: 40px;
    font-style: italic;
    font-weight: 300;
}
.site {
    font-family: "Liberation Sans", sans-serif;
    font-size: 18px;
    font-style: italic;
    fill: #8495a0;
}
.view-tools {
    position: absolute;
    top: 7px;
    left: 663px;
    right: 0;
    display: flex;
    height: 46px;
    padding: 4px 0 4px 3px;
    background: #f9fafc;
    border: 1px solid #a3a7aa;
    border-right: 0;
    overflow: hidden;
}
.view-tools button {
    position: relative;
    display: flex;
    flex: none;
    align-items: center;
    justify-content: center;
    width: 38px;
    height: 36px;
}
.view-tools .corner {
    position: absolute;
    right: 4px;
    bottom: 4px;
}
```
